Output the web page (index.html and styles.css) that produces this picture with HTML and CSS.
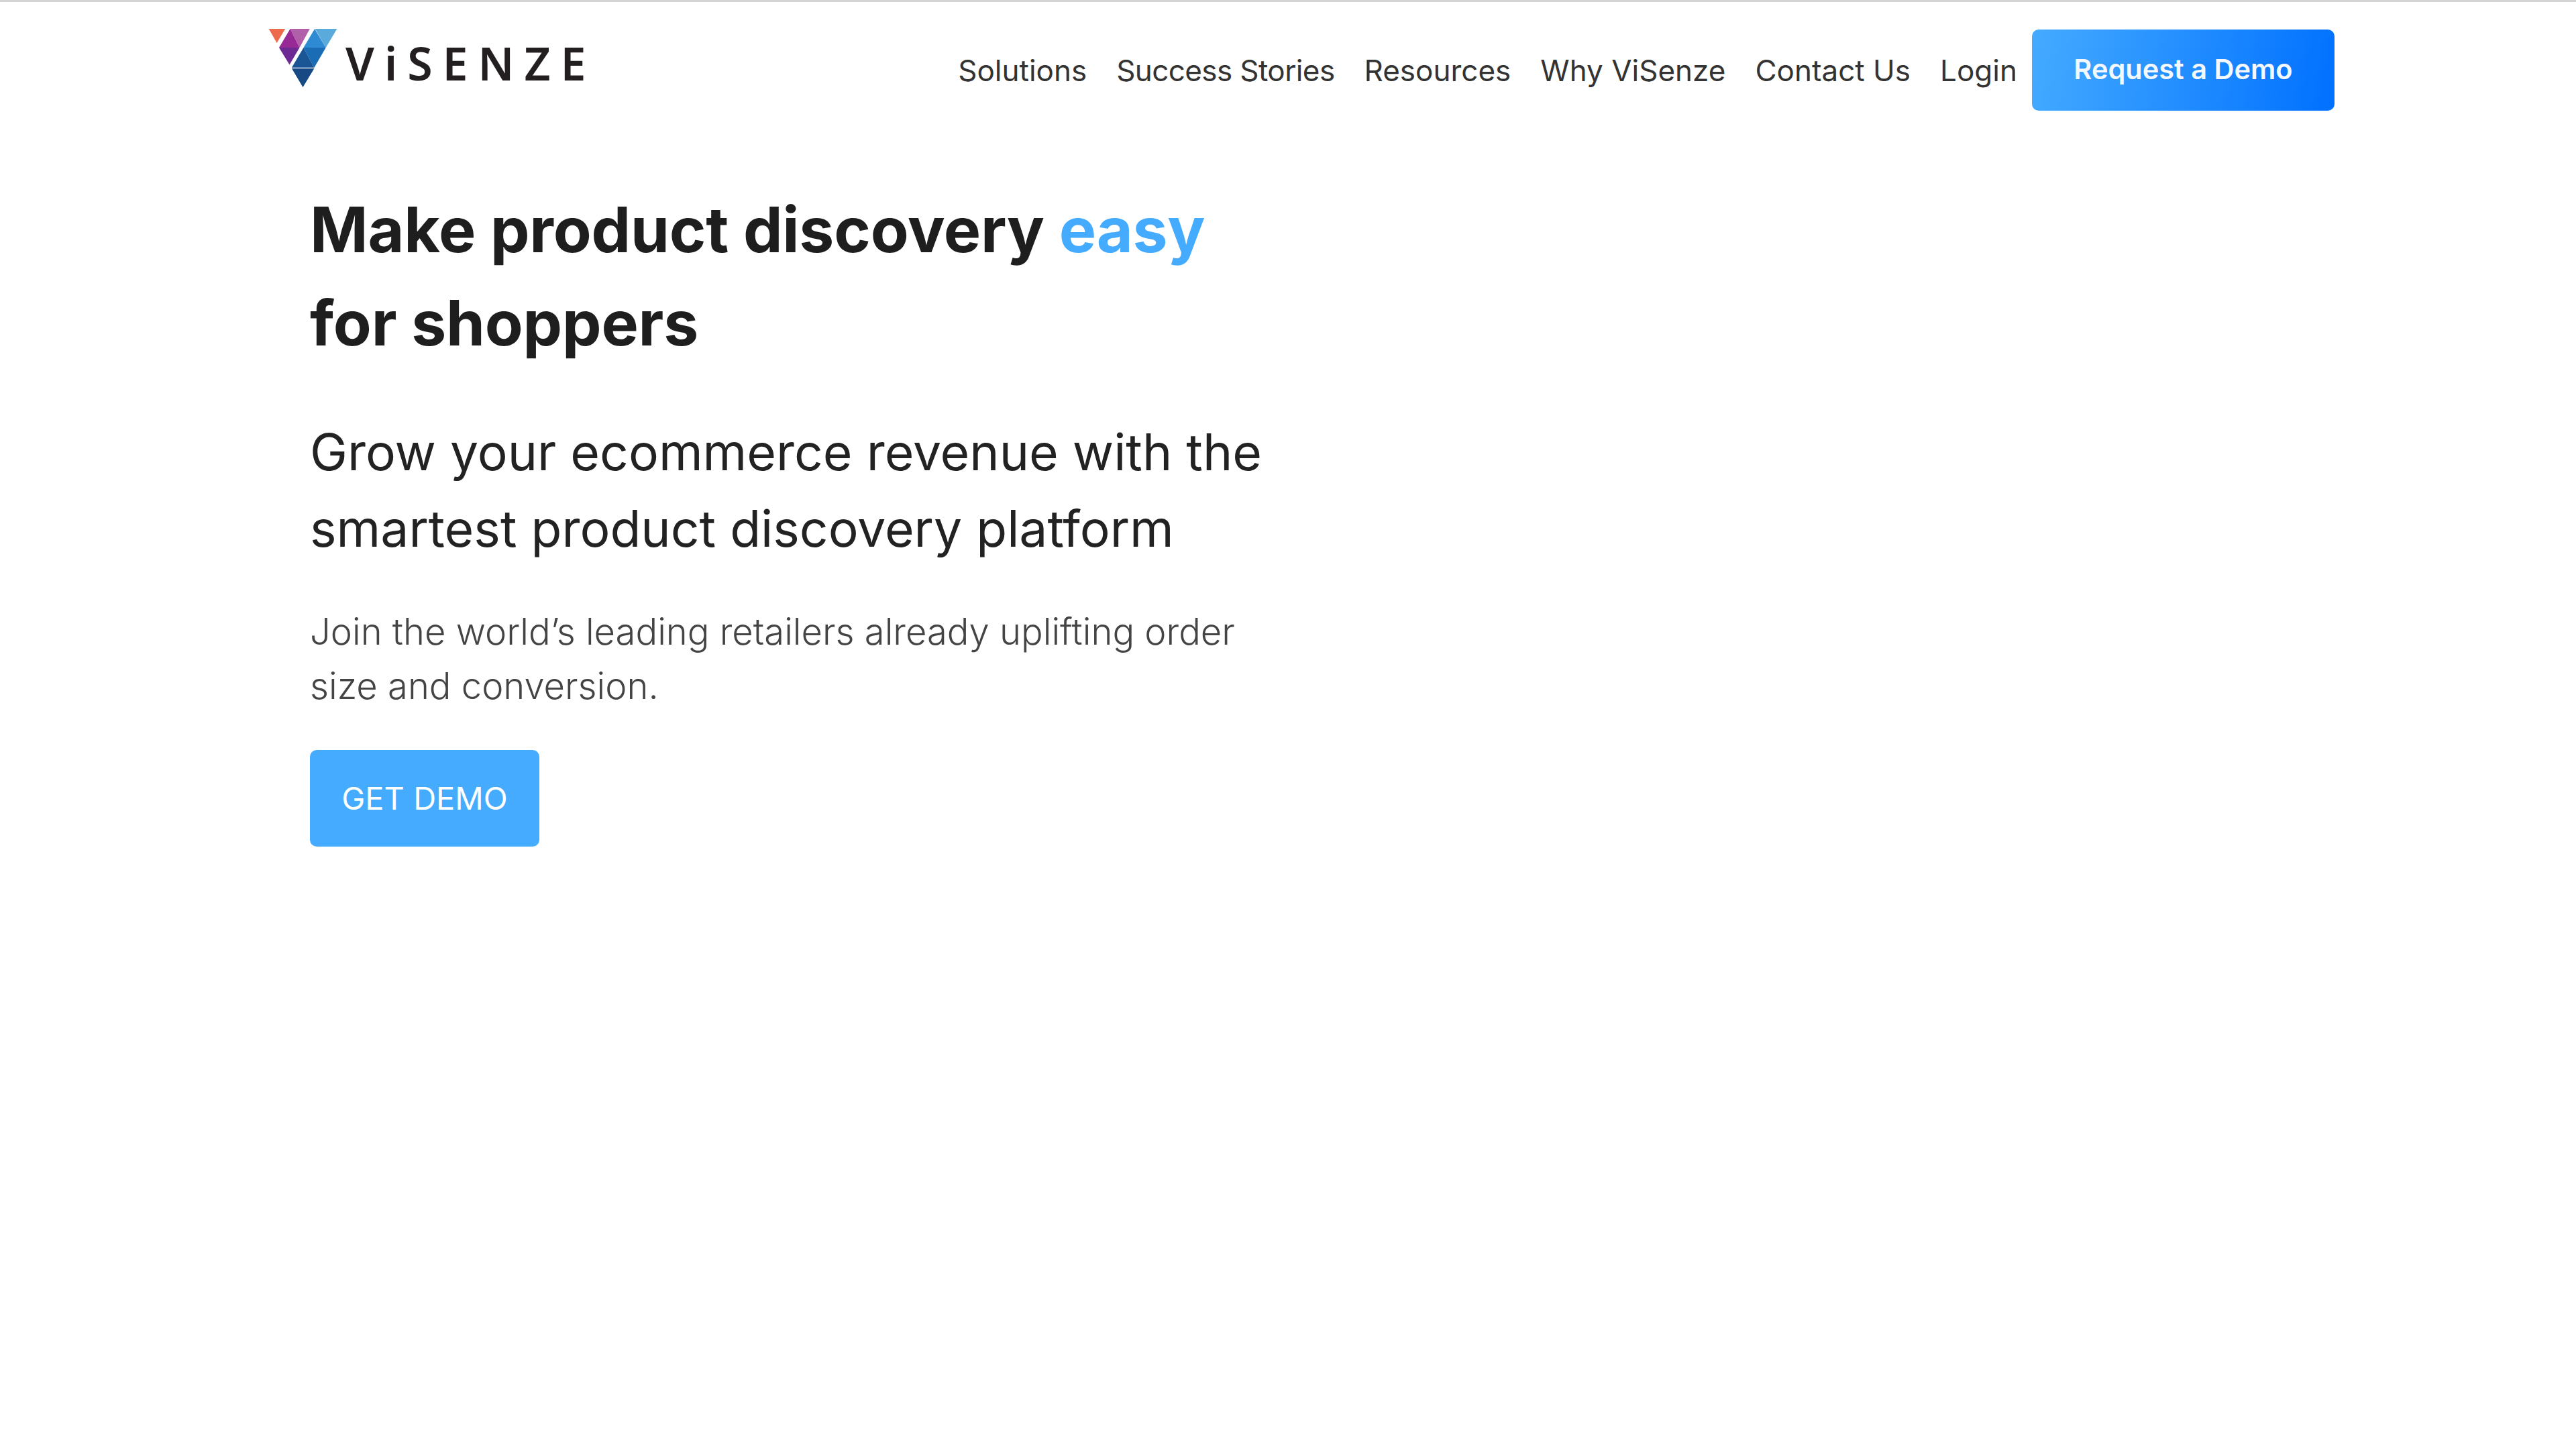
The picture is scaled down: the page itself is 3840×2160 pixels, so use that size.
FILE: index.html
```html
<!DOCTYPE html>
<html lang="en">
<head>
  <meta charset="UTF-8">
  <title>ViSenze</title>
  <link rel="stylesheet" href="styles.css">
</head>
<body>

  <header class="site-header">
    <a class="logo" href="#">
      <svg class="logo-mark" viewBox="60 125 310 268" aria-hidden="true">
        <polygon fill="#ee6a4d" points="62,128 136,128 98,191"/>
        <polygon fill="#b05fa8" points="158,128 246,128 200,212"/>
        <polygon fill="#982a96" points="158,128 200,212 108,212"/>
        <polygon fill="#6d2a92" points="108,212 200,212 155,289"/>
        <polygon fill="#5aaadc" points="270,128 368,128 318,212"/>
        <polygon fill="#2f8ad4" points="268,128 318,212 218,212"/>
        <polygon fill="#1a6cb4" points="218,212 318,212 266,302"/>
        <polygon fill="#1a5596" points="218,212 266,302 165,302"/>
        <polygon fill="#174a85" points="165,306 266,306 215,390"/>
      </svg>
      <span class="logo-text">ViSENZE</span>
    </a>
    <nav class="main-nav">
      <a href="#">Solutions</a>
      <a class="tight" href="#">Success Stories</a>
      <a href="#">Resources</a>
      <a href="#">Why ViSenze</a>
      <a href="#">Contact Us</a>
      <a class="login" href="#">Login</a>
      <a class="demo-btn" href="#">Request a Demo</a>
    </nav>
  </header>

  <main class="hero">
    <h1>Make product discovery <span class="accent">easy</span><br>for shoppers</h1>
    <h2>Grow your ecommerce revenue with the<br>smartest product discovery platform</h2>
    <p>Join the world’s leading retailers already uplifting order<br>size and conversion.</p>
    <a class="get-demo" href="#">GET DEMO</a>
  </main>

</body>
</html>
```

FILE: styles.css
```css
* {
  box-sizing: border-box;
}

body {
  margin: 0;
  min-height: 100vh;
  background-color: #ffffff;
  border-top: 3px solid #d4d4d4;
  font-family: "Inter", "Noto Sans", sans-serif;
  color: #222222;
}

a {
  text-decoration: none;
  color: inherit;
}

.site-header {
  display: flex;
  justify-content: space-between;
  align-items: flex-start;
  width: 3080px;
  margin-left: 400px;
  padding-top: 39px;
}

.logo {
  display: flex;
  align-items: flex-start;
  gap: 12px;
}

.logo-mark {
  width: 103px;
  height: 89px;
}

.logo-text {
  margin-top: 22px;
  font-family: "Noto Sans", sans-serif;
  font-size: 68px;
  line-height: 60px;
  font-weight: 600;
  letter-spacing: 15px;
  color: #231f20;
}

.main-nav {
  display: flex;
  align-items: center;
  gap: 44px;
  padding-top: 2px;
  font-size: 44px;
  color: #333333;
}

.main-nav .tight {
  letter-spacing: -0.6px;
}

.main-nav .login {
  margin-right: -22px;
}

.demo-btn {
  display: flex;
  align-items: center;
  justify-content: center;
  width: 451px;
  height: 121px;
  padding-bottom: 4px;
  border-radius: 10px;
  background: linear-gradient(100deg, #45abff 0%, #0070ff 100%);
  color: #f4f9ff;
  font-size: 41.5px;
  font-weight: 600;
}

.hero {
  padding: 108px 0 0 462px;
}

.hero h1 {
  margin: 0;
  font-size: 93px;
  line-height: 139px;
  font-weight: 700;
  letter-spacing: -0.2px;
  color: #1e1e1e;
}

.accent {
  color: #45abff;
}

.hero h2 {
  margin: 66px 0 0;
  font-size: 75px;
  line-height: 114px;
  font-weight: 400;
  color: #222222;
}

.hero p {
  margin: 56px 0 0;
  font-size: 54.3px;
  line-height: 81px;
  font-weight: 300;
  color: #444444;
}

.get-demo {
  display: flex;
  align-items: center;
  justify-content: center;
  width: 342px;
  height: 144px;
  margin-top: 55px;
  padding-bottom: 2px;
  border-radius: 10px;
  background-color: #45abff;
  color: #ffffff;
  font-size: 47px;
}
```
